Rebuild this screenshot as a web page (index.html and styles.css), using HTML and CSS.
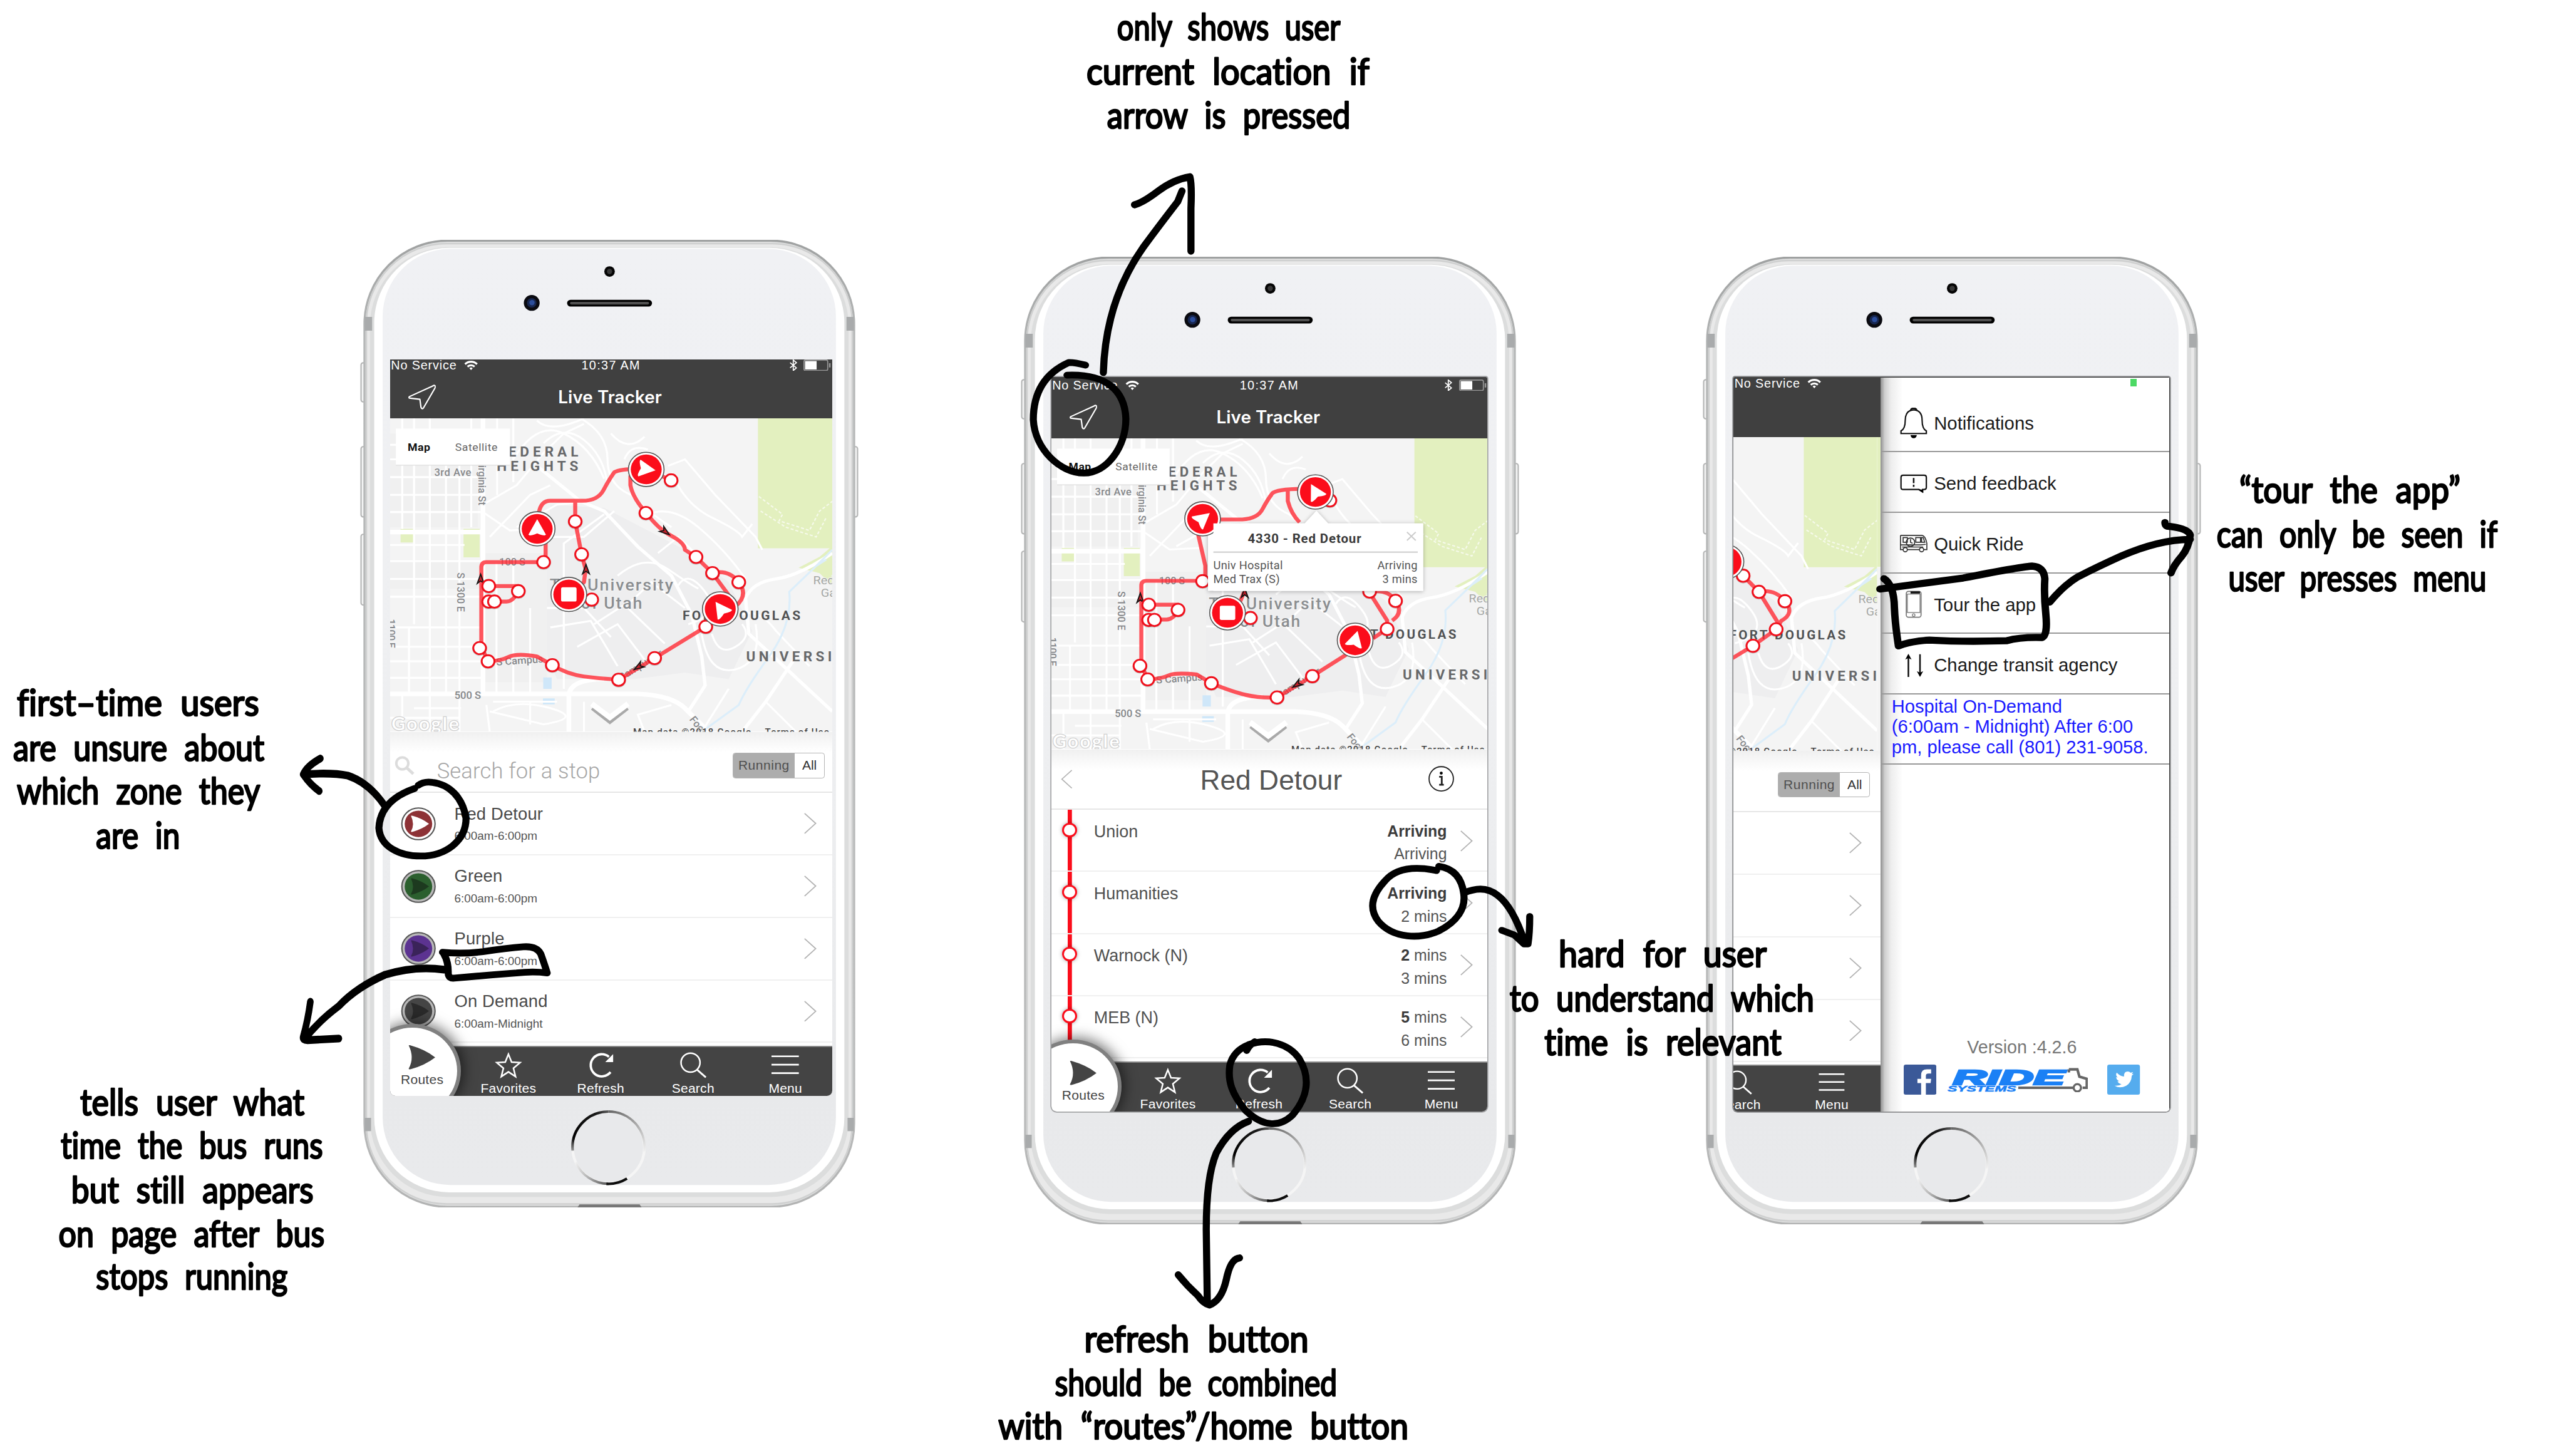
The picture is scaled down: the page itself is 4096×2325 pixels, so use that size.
FILE: index.html
```html
<!DOCTYPE html>
<html lang="en">
<head>
<meta charset="utf-8">
<title>Live Tracker – usability notes</title>
<link rel="stylesheet" href="styles.css">
</head>
<body>
<svg class="defs" aria-hidden="true">
  <defs>
    <linearGradient id="face" x1="0" x2="0" y1="0" y2="1"><stop offset="0" stop-color="#f0f1f4"/><stop offset=".5" stop-color="#eeeff1"/><stop offset=".9" stop-color="#e8e9eb"/><stop offset="1" stop-color="#e9eaec"/></linearGradient>
    <linearGradient id="edgeV" x1="0" x2="0" y1="0" y2="1"><stop offset="0" stop-color="#9fa1a1"/><stop offset=".1" stop-color="#b5b7b7"/><stop offset=".9" stop-color="#b9baba"/><stop offset="1" stop-color="#b2b3b3"/></linearGradient>
    <linearGradient id="ringA" gradientUnits="userSpaceOnUse" x1="396" y1="1730" x2="470" y2="1652"><stop offset="0" stop-color="#aaa"/><stop offset=".2" stop-color="#000"/><stop offset=".8" stop-color="#1a1a1a"/><stop offset="1" stop-color="#666"/></linearGradient>
    <linearGradient id="ringB" gradientUnits="userSpaceOnUse" x1="464" y1="1652" x2="532" y2="1730"><stop offset="0" stop-color="#666"/><stop offset=".6" stop-color="#b5b5b5"/><stop offset="1" stop-color="#f3f3f3"/></linearGradient>
    <linearGradient id="ringC" gradientUnits="userSpaceOnUse" x1="402" y1="1745" x2="464" y2="1789"><stop offset="0" stop-color="#f3f3f3"/><stop offset=".5" stop-color="#b0b0b0"/><stop offset="1" stop-color="#555"/></linearGradient>
  </defs>
  <symbol id="frame" viewBox="-8 0 946 1834" preserveAspectRatio="none">
    <g fill="#f4f4f4" stroke="#b4b5b5" stroke-width="2.5">
      <rect x="-5" y="233" width="12" height="74" rx="4"/><rect x="-5" y="392" width="12" height="133" rx="4"/><rect x="-5" y="558" width="12" height="134" rx="4"/><rect x="925" y="392" width="11" height="133" rx="4"/>
    </g>
    <rect x="1.5" y="1.5" width="928" height="1831" rx="158" fill="#e0e1e1" stroke="url(#edgeV)" stroke-width="4"/>
    <rect x="5" y="7" width="921" height="1820" rx="152" fill="#e9e9e9" stroke="#cfd0d0" stroke-width="3"/>
    <rect x="12" y="14" width="907" height="1800" rx="148" fill="#dcdddd" />
    <rect x="20" y="15" width="891" height="1790" rx="142" fill="#fff"/>
    <rect x="36" y="17" width="859" height="1774" rx="128" fill="url(#face)"/>
    <path d="M2 146h14v26H2zM915 146h14v26h-14zM2 1664h12v25H2zM917 1664h12v25h-12z" fill="#a9abac"/>
    <circle cx="466" cy="60" r="10" fill="#050505"/><circle cx="466" cy="60" r="5" fill="#383838"/>
    <circle cx="318.5" cy="119.5" r="15" fill="#0a0a10"/><circle cx="318.5" cy="119.5" r="9" fill="#17264f"/><circle cx="319" cy="119" r="5" fill="#2c4e9c"/>
    <rect x="385.500" y="113.500" width="161" height="13" rx="6.500" fill="#000"/><rect x="391" y="117.500" width="150" height="5" rx="2.500" fill="#505050"/>
    <circle cx="464" cy="1720" r="68" fill="#e8e9eb" stroke="#f5f5f5" stroke-width="5"/>
    <path d="M396 1726A68 68 0 0 1 464 1652" fill="none" stroke="url(#ringA)" stroke-width="5"/>
    <path d="M464 1652A68 68 0 0 1 532 1728" fill="none" stroke="url(#ringB)" stroke-width="4.500"/>
    <path d="M402 1748A68 68 0 0 0 464 1789" fill="none" stroke="url(#ringC)" stroke-width="4.500"/>
    <path d="M460 1789A68 68 0 0 0 499 1779" fill="none" stroke="#0d0d0d" stroke-width="5"/>
    <path d="M405 1834l4-6h114l4 6z" fill="#777"/>
  </symbol>
  <symbol id="i-wifi" viewBox="0 0 44 30"><path d="M2 10a29 29 0 0 1 40 0l-4 4.500a23 23 0 0 0-32 0zM9.500 17.500a18 18 0 0 1 25 0l-4 4.500a12 12 0 0 0-17 0zM17 24.500a7.500 7.500 0 0 1 10 0L22 30z" fill="#fff"/></symbol>
  <symbol id="i-bt" viewBox="0 0 16 22"><path d="M2 6l12 10-6 5V1l6 5L2 16" fill="none" stroke="#fff" stroke-width="2"/></symbol>
  <symbol id="i-batt" viewBox="0 0 52 22"><rect x="1" y="1" width="45" height="20" rx="3" fill="none" stroke="#999" stroke-width="2"/><rect x="3" y="3" width="22" height="16" fill="#fff"/><path d="M50 7v8" stroke="#999" stroke-width="3"/></symbol>
  <symbol id="i-loc" viewBox="0 0 52 48"><path d="M50 2Q49 1 46 3L2 23Q0 26 4 26L22 28L24 43Q26 48 29 44L51 6Q52 3 50 2Z" fill="none" stroke="#fff" stroke-width="2.600" stroke-linejoin="round"/></symbol>
  <symbol id="i-star" viewBox="0 0 52 50"><path d="M26 4l6 15 16 1-12.500 10.500 4 16L26 37.500 12.500 46.500l4-16L4 20l16-1z" fill="none" stroke="#fff" stroke-width="3"/></symbol>
  <symbol id="i-refresh" viewBox="0 0 52 50"><path d="M45 38A21 21 0 1 1 42 9" fill="none" stroke="#fff" stroke-width="4.500"/><path d="M50 4v15H35z" fill="#fff"/></symbol>
  <symbol id="i-search" viewBox="0 0 52 50"><circle cx="21" cy="20" r="18" fill="none" stroke="#fff" stroke-width="3"/><path d="M33 33l17 15" stroke="#fff" stroke-width="3.500"/></symbol>
  <symbol id="i-menu" viewBox="0 0 52 50"><path d="M0 8h52M0 24h52M0 40h52" stroke="#fff" stroke-width="3.200"/></symbol>
  <symbol id="i-chev" viewBox="0 0 24 40"><path d="M1 1l21 19L1 39" fill="none" stroke="#b3b3b3" stroke-width="2.200"/></symbol>
  <symbol id="i-dart" viewBox="0 0 52 46"><path d="M1 1Q0 0 3 0Q32 8 51 23Q32 38 3 46Q0 46 1 44Q12 24 1 1Z"/></symbol>
  <symbol id="base" viewBox="124 593 1314 970" preserveAspectRatio="none">
    <rect x="124" y="593" width="1314" height="970" fill="#f4f4f4"/>
    <path d="M600 860L760 870 1000 1000 1130 1100 1200 1250 1130 1400 1000 1380 850 1400 620 1400 560 1250 585 1050Z" fill="#eeeeef"/>
    <path d="M400 1010h190v400H400zM124 640h260v290H124zM124 1030h270v90H124z" fill="#f0f0f0"/>
    <path d="M1217 593h221v402H1217zM1338 1055L1400 1022 1438 988V1110L1400 1072ZM155 935h40v42h-40zM342 935h48v88h-48z" fill="#e3f0bf"/>
    <path d="M579 1395h25v35h-25zM578 1460h35v18h-35z" fill="#cfe7f9"/>
    <g fill="none" stroke="#fff" stroke-width="6">
      <path d="M124 675H395M124 720H390M124 775H395M124 830H395M124 883H395M124 985H345M124 1035H395M124 1090H395M124 1145H395M124 1240H395M124 1300H395M124 1345H395M124 1396H400M124 1520H330M195 1490h140"/>
      <path d="M160 593V935M195 593V1230M242 593V1563M290 700V1440M330 740V1563M365 593V930M442 593V830M490 593V790M490 1020V1440M440 1040V1440M180 1240V1440M160 1440V1563"/>
      <path d="M400 860L500 800 580 700 640 640 700 610M490 720Q560 600 640 640T760 780M580 670Q640 610 700 660T770 800M500 930L620 860 720 850M420 960L540 830 600 800M395 880L480 940 570 935M560 600Q600 640 700 593M690 593Q770 640 770 720T840 830Q900 890 960 930M780 640Q830 700 880 650M820 720Q840 670 890 690M600 960H700L790 880M640 1100V980L760 890"/>
      <path d="M950 740L1000 720 1090 830 1210 960 1230 1000M960 760Q1000 860 1080 900T1170 960L1200 920M890 890Q960 860 1040 930T1180 1090M920 1010L980 960 1040 1020M800 1080Q880 1010 950 1060T1040 1120M730 1230L820 1170 940 1290M680 1300L800 1230 880 1340M590 1180H700L780 1270M600 1240L720 1220 800 1360M640 1120V1430M540 1180V1440M840 1160L900 1100 1000 1180M980 1110Q1010 1060 1060 1130T1010 1230M1080 1260Q1100 1330 1150 1300T1170 1230M1050 1260Q1070 1390 1150 1370T1210 1230M1170 1200Q1220 1180 1270 1250L1370 1360"/>
      <path d="M430 1470H620M430 1500Q500 1460 600 1490T580 1540L420 1500M540 1470V1540M880 1563L860 1510 960 1480M1240 1470L1330 1563M1130 1430L1050 1563M700 1470V1563M420 1563L410 1480"/>
    </g>
    <g fill="none" stroke="#fff" stroke-width="14">
      <path d="M124 1446H860Q960 1450 1000 1490L1070 1563M400 593V1440M124 945H395"/>
      <path d="M560 740L690 850 760 880 860 990 960 1080 1020 1200 1050 1330 1060 1420 1010 1500M1438 1010Q1340 1080 1270 1090T1180 1150L1190 1260 1438 1500M1330 1330L1240 1470 1170 1563" stroke-width="10"/>
      <path d="M655 1563V1450Q660 1400 760 1400"/>
    </g>
    <path d="M1220 835L1290 890 1280 910 1370 940 1400 880 1438 850M1225 880L1300 930 1390 960 1420 900" fill="none" stroke="#f6faeb" stroke-width="4" stroke-dasharray="9 6"/>
    <path d="M1438 1000L1380 1060 1310 1130Q1320 1230 1250 1330T1160 1480L1050 1563M1390 1050l30-20" fill="none" stroke="#dceefa" stroke-width="6"/>
    <g class="maplabel">
      <text x="441" y="712" class="area" textLength="242">FEDERAL</text>
      <text x="441" y="755" class="area" textLength="242">HEIGHTS</text>
      <text x="255" y="771" textLength="110">3rd Ave</text>
      <text transform="translate(387 738) rotate(90)" textLength="124">irginia St</text>
      <text x="448" y="1049" textLength="78">100 S</text>
      <text transform="translate(324 1070) rotate(90)" textLength="122">S 1300 E</text>
      <text transform="translate(117 1214) rotate(90)" textLength="90">1100 E</text>
      <text x="598" y="1126" class="uni" textLength="367">The University</text>
      <text x="691" y="1182" class="uni" textLength="182">of Utah</text>
      <text x="993" y="1218" class="fort" textLength="350">FORT DOUGLAS</text>
      <text x="1182" y="1345" class="area" textLength="290">UNIVERSIT</text>
      <text x="1381" y="1106" class="park">Red</text><text x="1404" y="1145" class="park">Gar</text>
      <text transform="translate(440 1358) rotate(-4)" textLength="140">S Campus</text>
      <text transform="translate(790 1420) rotate(-33)" textLength="175">S Campus Dr</text>
      <text x="315" y="1462" textLength="79">500 S</text>
      <text transform="translate(1012 1525) rotate(52)">Foot</text>
      <text x="128" y="1558" class="google" textLength="200">Google</text>
      <text x="846" y="1574" class="credit" textLength="350">Map data ©2018 Google</text><text x="1238" y="1574" class="credit" textLength="190">Terms of Use</text>
    </g>
    <path d="M141 625h339v112H141z" fill="#fff"/><path d="M141 738h339" stroke="#e2e2e2" stroke-width="3"/>
    <text x="176" y="693" class="mt on" textLength="67">Map</text><text x="317" y="693" class="mt" textLength="126">Satellite</text>
  </symbol>
  <symbol id="down" viewBox="0 0 120 70" preserveAspectRatio="none"><path d="M8 12L60 52 112 12" transform="translate(0 8)" fill="none" stroke="#777" stroke-opacity=".6" stroke-width="13"/><path d="M6 8L60 48 114 8" fill="none" stroke="#fff" stroke-width="16"/></symbol>
  <symbol id="stop" viewBox="-26 -26 52 52" overflow="visible"><circle r="22" cy="2" fill="#000" opacity=".16"/><circle r="19" fill="#fff" stroke="#f0101c" stroke-width="5.500"/></symbol>
  <symbol id="bus" viewBox="-60 -60 120 120" overflow="visible"><circle r="53" fill="#fff" stroke="#555" stroke-width="3"/><circle r="46" fill="#fb0d1b"/></symbol>
  <symbol id="nav-arrow" viewBox="-30 -30 60 60" overflow="visible"><path d="M0-28L26 20Q24 26 0 16Q-24 26-26 20Z" fill="#fff"/></symbol>
  <symbol id="tick" viewBox="-16 -18 32 36" overflow="visible"><path d="M0-15L10 14 0 6-10 14Z" fill="#c8202a" stroke="#151515" stroke-width="3.500"/></symbol>
</svg>

<main class="board">

  <section class="phone p1">
    <svg class="frame"><use href="#frame"/></svg>
    <div class="screen">
      <header class="top">
        <div class="status"><span class="carrier">No Service<svg><use href="#i-wifi"/></svg></span><span class="clock">10:37 AM</span><span class="sys"><svg class="bt"><use href="#i-bt"/></svg><svg class="batt"><use href="#i-batt"/></svg></span></div>
        <div class="bar"><svg class="loc"><use href="#i-loc"/></svg><h1>Live Tracker</h1></div>
      </header>
      <svg class="map" viewBox="124 593 1314 970" preserveAspectRatio="none">
        <use href="#base" x="124" y="593" width="1314" height="970"/>
        <g class="route">
          <path d="M580 1038H410Q395 1038 395 1055V1300L415 1345Q450 1345 475 1332T560 1330L606 1357Q650 1385 700 1392T803 1402L910 1335 1062 1238M415 1112H505L505 1128Q490 1160 470 1160H395"/>
          <path d="M586 1038V940M566 900V885Q572 848 600 848H690Q740 850 758 815T790 760Q810 748 880 750M674 848V912L693 1014 705 1060 700 1100 655 1138M838 770V800Q845 840 885 885Q920 935 960 957T1000 1000L1033 1022 1082 1072Q1130 1060 1160 1100T1150 1175M1082 1072L1130 1140M885 750L959 785"/>
        </g>
        <g class="stops">
          <use href="#tick" x="377" y="1072" width="32" height="36"/><use href="#tick" x="690" y="1042" width="32" height="36"/>
          <g transform="translate(942 944) rotate(128)"><use href="#tick" x="-16" y="-18" width="32" height="36"/></g><g transform="translate(862 1362) rotate(236)"><use href="#tick" x="-16" y="-18" width="32" height="36"/></g>
          <use href="#stop" x="391" y="1134" width="52" height="52"/><use href="#stop" x="554" y="1012" width="52" height="52"/><use href="#stop" x="648" y="886" width="52" height="52"/><use href="#stop" x="667" y="988" width="52" height="52"/><use href="#stop" x="391" y="1086" width="52" height="52"/><use href="#stop" x="479" y="1102" width="52" height="52"/><use href="#stop" x="408" y="1134" width="52" height="52"/><use href="#stop" x="364" y="1278" width="52" height="52"/><use href="#stop" x="389" y="1319" width="52" height="52"/><use href="#stop" x="580" y="1331" width="52" height="52"/><use href="#stop" x="777" y="1376" width="52" height="52"/><use href="#stop" x="884" y="1309" width="52" height="52"/><use href="#stop" x="1036" y="1212" width="52" height="52"/><use href="#stop" x="697" y="1128" width="52" height="52"/><use href="#stop" x="858" y="860" width="52" height="52"/><use href="#stop" x="933" y="759" width="52" height="52"/><use href="#stop" x="1007" y="996" width="52" height="52"/><use href="#stop" x="1056" y="1046" width="52" height="52"/><use href="#stop" x="1134" y="1074" width="52" height="52"/>
        </g>
        <use href="#bus" x="825" y="691" width="120" height="120"/><g transform="translate(885 750) rotate(98)"><use href="#nav-arrow" x="-30" y="-30" width="60" height="60"/></g>
        <use href="#bus" x="501" y="875" width="120" height="120"/><use href="#nav-arrow" x="531" y="903" width="60" height="60"/>
        <use href="#bus" x="595" y="1078" width="120" height="120"/><rect x="632" y="1116" width="46" height="44" rx="5" fill="#fff"/>
        <use href="#bus" x="1045" y="1123" width="120" height="120"/><g transform="translate(1107 1184) rotate(-35)"><use href="#nav-arrow" x="-30" y="-30" width="60" height="60"/></g>
        <use href="#down" x="717" y="1468" width="120" height="74"/>
      </svg>
      <div class="search"><svg class="mag" viewBox="0 0 40 38"><circle cx="15" cy="15" r="12" fill="none" stroke="#dcdcdc" stroke-width="5"/><path d="M24 24l13 12" stroke="#dcdcdc" stroke-width="6"/></svg><span class="ph">Search for a stop</span><span class="seg"><b>Running</b><i>All</i></span></div>
      <ul class="routes">
        <li><svg class="badge red" viewBox="0 0 68 64"><ellipse cx="34" cy="32" rx="32" ry="30.500"/><ellipse class="in" cx="34" cy="32" rx="26.500" ry="25.500"/><use href="#i-dart" x="19" y="16" width="36" height="32"/></svg><div><h2>Red Detour</h2><p>6:00am-6:00pm</p></div><svg class="chev"><use href="#i-chev"/></svg></li>
        <li><svg class="badge green" viewBox="0 0 68 64"><ellipse cx="34" cy="32" rx="32" ry="30.500"/><ellipse class="in" cx="34" cy="32" rx="26.500" ry="25.500"/><use href="#i-dart" x="19" y="16" width="36" height="32"/></svg><div><h2>Green</h2><p>6:00am-6:00pm</p></div><svg class="chev"><use href="#i-chev"/></svg></li>
        <li><svg class="badge purple" viewBox="0 0 68 64"><ellipse cx="34" cy="32" rx="32" ry="30.500"/><ellipse class="in" cx="34" cy="32" rx="26.500" ry="25.500"/><use href="#i-dart" x="19" y="16" width="36" height="32"/></svg><div><h2>Purple</h2><p>6:00am-6:00pm</p></div><svg class="chev"><use href="#i-chev"/></svg></li>
        <li><svg class="badge gray" viewBox="0 0 68 64"><ellipse cx="34" cy="32" rx="32" ry="30.500"/><ellipse class="in" cx="34" cy="32" rx="26.500" ry="25.500"/><use href="#i-dart" x="19" y="16" width="36" height="32"/></svg><div><h2>On Demand</h2><p>6:00am-Midnight</p></div><svg class="chev"><use href="#i-chev"/></svg></li>
      </ul>
      <nav class="tabs"><div class="home"><svg><use href="#i-dart"/></svg>Routes</div><a><svg><use href="#i-star"/></svg>Favorites</a><a><svg><use href="#i-refresh"/></svg>Refresh</a><a><svg><use href="#i-search"/></svg>Search</a><a><svg><use href="#i-menu"/></svg>Menu</a></nav>
    </div>
  </section>

  <section class="phone p2">
    <svg class="frame"><use href="#frame"/></svg>
    <div class="screen">
      <header class="top">
        <div class="status"><span class="carrier">No Service<svg><use href="#i-wifi"/></svg></span><span class="clock">10:37 AM</span><span class="sys"><svg class="bt"><use href="#i-bt"/></svg><svg class="batt"><use href="#i-batt"/></svg></span></div>
        <div class="bar"><svg class="loc"><use href="#i-loc"/></svg><h1>Live Tracker</h1></div>
      </header>
      <svg class="map" viewBox="113 606 1296 962" preserveAspectRatio="none">
        <use href="#base" x="113" y="606" width="1296" height="962"/>
        <g class="route">
          <path d="M562 1047H395Q380 1047 380 1062V1310L400 1352Q440 1350 460 1340T545 1337L588 1364Q650 1390 690 1400T783 1408L888 1342 1015 1258M400 1121H490V1137Q475 1167 455 1167H380"/>
          <path d="M570 1047V1000L548 900M610 857H680Q725 855 740 825T770 775Q790 760 900 762M815 762V800Q825 840 850 866M1057 1082L1110 1170 1110 1196 1068 1225M1057 1082Q1110 1070 1135 1108T1125 1170M637 1147L670 1120 685 1082M897 770L940 797"/>
        </g>
        <g class="stops">
          <use href="#tick" x="361" y="1082" width="32" height="36"/><use href="#tick" x="671" y="1066" width="32" height="36"/><g transform="translate(842 1368) rotate(236)"><use href="#tick" x="-16" y="-18" width="32" height="36"/></g>
          <use href="#stop" x="376" y="1142" width="52" height="52"/><use href="#stop" x="536" y="1022" width="52" height="52"/><use href="#stop" x="376" y="1095" width="52" height="52"/><use href="#stop" x="463" y="1111" width="52" height="52"/><use href="#stop" x="393" y="1142" width="52" height="52"/><use href="#stop" x="350" y="1284" width="52" height="52"/><use href="#stop" x="373" y="1326" width="52" height="52"/><use href="#stop" x="562" y="1338" width="52" height="52"/><use href="#stop" x="757" y="1382" width="52" height="52"/><use href="#stop" x="862" y="1316" width="52" height="52"/><use href="#stop" x="678" y="1136" width="52" height="52"/><use href="#stop" x="914" y="772" width="52" height="52"/><use href="#stop" x="1032" y="1054" width="52" height="52"/><use href="#stop" x="1109" y="1083" width="52" height="52"/><use href="#stop" x="1084" y="1170" width="52" height="52"/>
        </g>
        <path class="pop" d="M578 869H865L900 830 935 869H1217V1078H578Z"/>
        <use href="#bus" x="837" y="712" width="120" height="120"/><g transform="translate(897 772) rotate(-28)"><use href="#nav-arrow" x="-30" y="-30" width="60" height="60"/></g>
        <use href="#bus" x="502" y="795" width="120" height="120"/><g transform="translate(562 855) rotate(50)"><use href="#nav-arrow" x="-30" y="-30" width="60" height="60"/></g>
        <use href="#bus" x="576" y="1086" width="120" height="120"/><rect x="613" y="1124" width="46" height="44" rx="5" fill="#fff"/>
        <use href="#bus" x="955" y="1171" width="120" height="120"/><g transform="translate(1015 1229) rotate(15)"><use href="#nav-arrow" x="-30" y="-30" width="60" height="60"/></g>
        <path d="M594 869H1217V1078H594Z" fill="#fff"/>
        <path d="M594 958H1201" stroke="#c4c4c4" stroke-width="3.500"/><path d="M1169 896l26 26m0-26l-26 26" stroke="#ccc" stroke-width="4"/>
        <g class="poptext"><text x="696" y="929" class="h" textLength="337">4330 - Red Detour</text><text x="594" y="1011" textLength="206">Univ Hospital</text><text x="594" y="1054" textLength="197">Med Trax (S)</text><text x="1081" y="1011" textLength="119">Arriving</text><text x="1096" y="1054" textLength="104">3 mins</text></g>
        <use href="#down" x="697" y="1476" width="120" height="74"/>
      </svg>
      <div class="title"><svg class="back"><use href="#i-chev"/></svg><h2>Red Detour</h2><svg class="info" viewBox="0 0 50 50"><circle cx="25" cy="25" r="23.500" fill="none" stroke="#222" stroke-width="2.200"/><circle cx="25" cy="14" r="2.900"/><path d="M21 21h5v15M21 36.500h9" fill="none" stroke="#222" stroke-width="3.400"/></svg></div>
      <ul class="stopslist">
        <li><i class="dot"></i><h3>Union</h3><div><b>Arriving</b><span>Arriving</span></div><svg class="chev"><use href="#i-chev"/></svg></li>
        <li><i class="dot"></i><h3>Humanities</h3><div><b>Arriving</b><span>2 mins</span></div><svg class="chev"><use href="#i-chev"/></svg></li>
        <li><i class="dot"></i><h3>Warnock (N)</h3><div><span><b>2</b> mins</span><span>3 mins</span></div><svg class="chev"><use href="#i-chev"/></svg></li>
        <li><i class="dot"></i><h3>MEB (N)</h3><div><span><b>5</b> mins</span><span>6 mins</span></div><svg class="chev"><use href="#i-chev"/></svg></li>
      </ul>
      <nav class="tabs"><div class="home"><svg><use href="#i-dart"/></svg>Routes</div><a><svg><use href="#i-star"/></svg>Favorites</a><a><svg><use href="#i-refresh"/></svg>Refresh</a><a><svg><use href="#i-search"/></svg>Search</a><a><svg><use href="#i-menu"/></svg>Menu</a></nav>
    </div>
  </section>

  <section class="phone p3">
    <svg class="frame"><use href="#frame"/></svg>
    <div class="screen split">
      <div class="under">
        <header class="top"><div class="status"><span class="carrier">No Service<svg><use href="#i-wifi"/></svg></span></div></header>
        <svg class="map" viewBox="118 601 437 972" preserveAspectRatio="none">
          <use href="#base" x="-751" y="601" width="1296" height="972"/>
          <rect x="545" y="601" width="12" height="402" fill="#e3f0bf"/><rect x="545" y="1003" width="12" height="570" fill="#f4f4f4"/>
          <g class="route"><path d="M100 985L147 1030 194 1080Q240 1070 271 1108T260 1170L245 1196 176 1247 100 1295M194 1080L250 1175"/></g>
          <g class="stops"><use href="#stop" x="121" y="1004" width="52" height="52"/><use href="#stop" x="168" y="1054" width="52" height="52"/><use href="#stop" x="245" y="1083" width="52" height="52"/><use href="#stop" x="219" y="1170" width="52" height="52"/><use href="#stop" x="150" y="1221" width="52" height="52"/></g>
          <use href="#bus" x="36" y="927" width="120" height="120"/>
        </svg>
        <div class="search"><span class="seg"><b>Running</b><i>All</i></span></div>
        <ul class="routes"><li><svg class="chev"><use href="#i-chev"/></svg></li><li><svg class="chev"><use href="#i-chev"/></svg></li><li><svg class="chev"><use href="#i-chev"/></svg></li><li><svg class="chev"><use href="#i-chev"/></svg></li></ul>
        <nav class="tabs"><a><svg><use href="#i-search"/></svg>Search</a><a><svg><use href="#i-menu"/></svg>Menu</a></nav>
      </div>
      <aside class="drawer">
        <span class="led"></span>
        <a class="first"><svg viewBox="0 0 52 58"><path d="M20 6Q20 1 26 1T32 6M26 4Q42 5 42 24Q42 40 50 44V49H2V44Q10 40 10 24Q10 5 26 4Z" fill="none" stroke="#111" stroke-width="2.600"/><path d="M20 52h12q-1 6-6 6t-6-6z"/></svg>Notifications</a>
        <a><svg viewBox="0 0 52 58"><path d="M36 40H6Q2 40 2 36V17Q2 13 6 13H46Q50 13 50 17V36Q50 40 46 40H43V44Z" fill="none" stroke="#111" stroke-width="2.600"/><path d="M34 40h10v7z"/><path d="M26 18v10M26 31v4" stroke="#111" stroke-width="3"/></svg>Send feedback</a>
        <a><svg viewBox="0 0 52 58"><g fill="none" stroke="#333" stroke-width="2"><path d="M1 13H42Q48 14 51 28V40H45M38 40H14M7 40H1V13M1 31h38l10-1M6 17h8v9H6zM30 17h9v9h-9zM41 17h3l3 9h-6zM4 35h40"/><circle cx="10" cy="40" r="4"/><circle cx="41" cy="40" r="4"/><circle cx="20" cy="26" r="8"/><path d="M20 20v6l4 2"/></g></svg>Quick Ride</a>
        <a><svg viewBox="0 0 52 58"><rect x="12" y="4" width="28" height="49" rx="4" fill="none" stroke="#777" stroke-width="2"/><path d="M14 9h24v35H14z" fill="none" stroke="#777" stroke-width="1.500"/><path d="M20 6h18" stroke="#111" stroke-width="4"/><circle cx="26" cy="49" r="2.500" fill="none" stroke="#777" stroke-width="1.500"/></svg>Tour the app</a>
        <a><svg viewBox="0 0 52 58"><path d="M16 51V10M38 8V48" stroke="#111" stroke-width="3"/><path d="M16 7l-6 11 6-3 6 3zM38 51l-6-11 6 3 6-3z"/></svg>Change transit agency</a>
        <p class="notice">Hospital On-Demand<br>(6:00am - Midnight) After 6:00<br>pm, please call (801) 231-9058.</p>
        <div class="foot">
          <span>Version :4.2.6</span>
          <div class="brands">
            <svg class="fb" viewBox="0 0 62 57" preserveAspectRatio="none"><rect width="62" height="57" rx="4" fill="#3b5998"/><path d="M33 57V35H26V27H33V20Q33 9 44 9H52V17H47Q42 17 42 21V27H52L51 35H42V57Z" fill="#fff"/></svg>
            <svg class="ride" viewBox="0 0 266 46"><text x="10" y="32" class="r1" textLength="212" lengthAdjust="spacingAndGlyphs">RIDE</text><text x="0" y="45" class="r2" textLength="130" lengthAdjust="spacingAndGlyphs">SYSTEMS</text><path d="M134 38H238M230 3H246L250 17 264 21V38H256M230 3V9" fill="none" stroke="#666" stroke-width="5"/><circle cx="246" cy="38" r="7" fill="#fff" stroke="#666" stroke-width="4"/></svg>
            <svg class="tw" viewBox="0 0 62 57" preserveAspectRatio="none"><rect width="62" height="57" rx="4" fill="#55acee"/><path d="M14 40Q22 41 27 37Q21 36 19.500 31.500H23Q17 29 17 23.500L20 24.500Q15 20 18 15Q24 22 32 22.500Q31 13 39 13Q42 13 44.500 15.500L49 14L46.500 18L50 17.500L46.500 21Q46 34 36 40Q24 46 14 40Z" fill="#fff"/></svg>
          </div>
        </div>
      </aside>
    </div>
  </section>

  <svg class="ink" viewBox="0 0 4861 2759">
    <g class="stroke">
      <g transform="translate(0 1250) scale(.676 .7908)" stroke-width="18.500">
        <path d="M898 237Q860 255 850 275Q870 300 895 315M850 275Q930 270 975 278Q1035 295 1080 352"/>
        <path d="M1245 743Q1165 733 1080 755Q1000 785 950 830Q895 865 855 908M870 820Q863 865 850 904Q848 912 862 912L950 908"/>
      </g>
      <g transform="translate(660 1370) scale(.6378 .6122)" stroke-width="21">
        <path d="M197 203Q95 240 91 325C95 385 155 412 215 412C290 412 350 365 350 295C340 230 300 190 250 184Q225 180 208 193"/>
        <path d="M280 710Q340 716 400 708Q470 697 520 693Q560 690 572 715Q584 750 591 774Q550 768 500 774Q400 782 315 790Q298 792 297 775Q298 740 284 715" />
      </g>
      <path d="M2150 388Q2166 384 2195 362T2255 335Q2259 350 2257 395V476M2240 362L2232 382Q2195 430 2167 468Q2095 570 2091 706"/>
      <g transform="translate(1920 460) scale(.6378 .6122)" stroke-width="21">
        <path d="M215 379Q180 370 165 371Q60 420 60 548C65 640 140 713 210 713C280 713 335 630 335 545C332 460 280 405 160 410"/>
      </g>
      <g transform="translate(1920 1400) scale(.6378 .6122)" stroke-width="21">
        <path d="M1258 408Q1150 385 1105 440C1060 490 1060 530 1085 565C1130 620 1210 620 1265 595C1320 565 1345 525 1339 480Q1330 405 1265 395M1340 477Q1400 450 1440 485Q1485 520 1520 630M1535 550Q1535 600 1530 635H1518L1490 608 1452 593"/>
        <path d="M694 965Q700 950 718 938M700 947C760 925 820 945 850 990C885 1050 875 1110 830 1165C790 1205 740 1200 690 1150C650 1100 637 1060 644 1010Q655 965 700 947"/>
      </g>
      <path d="M2366 2125Q2330 2138 2305 2185Q2286 2230 2286 2330L2288 2470M2233 2416Q2250 2437 2270 2455Q2280 2470 2292 2473Q2315 2465 2324 2425Q2332 2385 2349 2384"/>
      <g transform="translate(3210 460) scale(.6378 .6122)" stroke-width="22">
        <path d="M553 1072Q680 1055 800 1038Q960 1005 1005 1001Q1040 1003 1043 1040Q1040 1090 1046 1150Q1052 1215 1035 1222Q970 1220 930 1232Q800 1236 700 1230Q650 1232 608 1248Q598 1180 596 1130Q595 1060 565 1040M1058 1112Q1100 1060 1140 1035Q1200 1003 1270 970Q1380 920 1475 918M1400 866Q1400 880 1415 878Q1470 885 1475 905Q1470 945 1450 970Q1425 1000 1418 1022"/>
      </g>
    </g>
    <g class="hand">
      <text x="32" y="1357" textLength="459" lengthAdjust="spacingAndGlyphs">first–time users</text>
      <text x="25" y="1442" textLength="476" lengthAdjust="spacingAndGlyphs">are unsure about</text>
      <text x="32" y="1524" textLength="461" lengthAdjust="spacingAndGlyphs">which zone they</text>
      <text x="182" y="1608" textLength="159" lengthAdjust="spacingAndGlyphs">are in</text>
      <text x="152" y="2114" textLength="425" lengthAdjust="spacingAndGlyphs">tells user what</text>
      <text x="115" y="2195" textLength="497" lengthAdjust="spacingAndGlyphs">time the bus runs</text>
      <text x="135" y="2280" textLength="459" lengthAdjust="spacingAndGlyphs">but still appears</text>
      <text x="111" y="2363" textLength="504" lengthAdjust="spacingAndGlyphs">on page after bus</text>
      <text x="182" y="2443" textLength="363" lengthAdjust="spacingAndGlyphs">stops running</text>
      <text x="2117" y="76" textLength="423" lengthAdjust="spacingAndGlyphs">only shows user</text>
      <text x="2059" y="160" textLength="536" lengthAdjust="spacingAndGlyphs">current location if</text>
      <text x="2098" y="243" textLength="461" lengthAdjust="spacingAndGlyphs">arrow is pressed</text>
      <text x="2954" y="1832" textLength="394" lengthAdjust="spacingAndGlyphs">hard for user</text>
      <text x="2861" y="1917" textLength="577" lengthAdjust="spacingAndGlyphs">to understand which</text>
      <text x="2927" y="2000" textLength="449" lengthAdjust="spacingAndGlyphs">time is relevant</text>
      <text x="2055" y="2562" textLength="425" lengthAdjust="spacingAndGlyphs">refresh button</text>
      <text x="1999" y="2645" textLength="535" lengthAdjust="spacingAndGlyphs">should be combined</text>
      <text x="1892" y="2727" textLength="777" lengthAdjust="spacingAndGlyphs">with “routes”/home button</text>
      <text x="4244" y="953" textLength="419" lengthAdjust="spacingAndGlyphs">“tour the app”</text>
      <text x="4201" y="1037" textLength="532" lengthAdjust="spacingAndGlyphs">can only be seen if</text>
      <text x="4223" y="1120" textLength="489" lengthAdjust="spacingAndGlyphs">user presses menu</text>
    </g>
  </svg>
</main>
</body>
</html>
```
FILE: styles.css
```css
* { box-sizing: border-box; margin: 0; padding: 0; }
html, body { background: #fff; overflow: hidden; }
body { font-family: "Liberation Sans", Arial, sans-serif; }
ul { list-style: none; }
.defs { position: absolute; width: 0; height: 0; }

.board { position: relative; width: 4861px; height: 2759px; zoom: .842625; overflow: hidden; background: #fff; }

/* phones placed freely on the board */
.phone { position: absolute; width: 931px; height: 1834px; --pitch: 118.4px; --tab: 175px; }
.p1 { left: 689px; top: 454px; }
.p2 { left: 1941px; top: 486px; --pitch: 117.6px; --tab: 172.7px; }
.p3 { left: 3234px; top: 486px; --pitch: 118.6px; }
.frame { position: absolute; left: -8px; top: 0; width: 946px; height: 1834px; }
.screen { position: relative; display: flex; flex-direction: column; margin: 227px 0 0 50px; width: 838px; height: 1396px; overflow: hidden; background: #fff; border-radius: 0 0 10px 10px; }
.p2 .screen { margin: 228px 0 0 51px; width: 827px; height: 1393px; box-shadow: 0 0 0 2px #a3a4a6; border-radius: 3px 3px 10px 10px; }
.p3 .screen { margin: 228px 0 0 51px; width: 827px; height: 1393px; box-shadow: 0 0 0 2px #8a8b8d; border-radius: 3px 3px 8px 8px; }

.top { flex: none; height: 112px; background: #404040; color: #fff; }
.p2 .top { height: 117px; padding-top: 5px; }
.p3 .top { height: 114px; padding-top: 2px; }
.status { display: grid; grid-template-columns: 1fr auto 1fr; height: 21px; align-items: center; font-size: 23.5px; line-height: 20px; letter-spacing: 1px; padding: 0 2px; white-space: nowrap; }
.carrier { display: flex; align-items: center; gap: 12px; }
.carrier svg { width: 29px; height: 19px; }
.clock { letter-spacing: 1.6px; }
.sys { display: flex; justify-content: flex-end; align-items: center; gap: 12px; }
.bt { width: 16px; height: 22px; } .batt { width: 52px; height: 22px; }
.bar { position: relative; display: flex; justify-content: center; align-items: center; height: 100px; padding-right: 4px; }
.bar h1 { font: 600 33px Inter, sans-serif; letter-spacing: .1px; }
.loc { position: absolute; left: 35px; top: 27px; width: 52px; height: 48px; }

.map { flex: none; display: block; width: 100%; height: 594px; }
.p2 .map { height: 589px; } .p3 .map { height: 595px; }
.maplabel { font: 500 31px Roboto, sans-serif; fill: #85878a; stroke: #f6f6f6; stroke-width: 4; paint-order: stroke; }
.area { font-weight: 700; font-size: 42px; fill: #67686a; }
.fort { font-weight: 700; font-size: 39px; fill: #505254; }
.uni { font-size: 50px; fill: #8b8e91; }
.park { font-size: 37px; font-weight: 400; fill: #a5a8a5; }
.google { font: 600 56px Lato, sans-serif; fill: #fff; stroke: #cfcfcf; stroke-width: 5; }
.credit { font-size: 28px; fill: #444; }
.mt { font: 400 33px Roboto, sans-serif; fill: #666; }
.mt.on { font-weight: 700; fill: #111; }
.route { fill: none; stroke: #ff2a34; stroke-opacity: .8; stroke-width: 12; stroke-linejoin: round; }
.pop { fill: #fff; filter: drop-shadow(0 3px 6px rgba(0,0,0,.3)); }
.poptext { font: 400 34px Roboto, sans-serif; fill: #555; }
.poptext .h { font-weight: 700; font-size: 38px; fill: #3a3a3a; }

.search, .title { flex: none; display: flex; align-items: center; height: 116px; border-bottom: 3px solid #e6e6e6; background: linear-gradient(#f0f0f0, #fff 38px); }
.mag { width: 39px; height: 36px; margin: 14px 0 0 9px; }
.ph { margin: 38px 0 0 41px; font: 300 41px/1 Roboto, sans-serif; letter-spacing: .2px; color: #a6a6a6; white-space: nowrap; }
.search .ph { margin-top: 36px; }
.seg { display: flex; width: 175px; height: 48px; margin: 14px 14px 0 auto; border: 2px solid #b4b4b4; border-radius: 5px; font-size: 25px; line-height: 46px; text-align: center; color: #505050; overflow: hidden; }
.seg b { font-weight: 400; width: 117px; background: #adadad; letter-spacing: .6px; }
.seg i { font-style: normal; flex: 1; color: #333; }

.routes li { display: flex; align-items: center; height: var(--pitch); border-bottom: 2.5px solid #f0f0f0; padding: 0 29px 0 21px; }
.routes div { padding: 0 0 0 34px; }
.routes h2 { font-size: 32.500px; font-weight: 400; line-height: 38px; color: #4a4a4a; letter-spacing: .2px; }
.routes p { margin-top: 9px; font-size: 22.500px; line-height: 28px; color: #555; }
.badge { width: 67px; height: 63px; fill: #b9b9b9; }
.badge > ellipse { stroke: #555; stroke-width: 2.5; }
.badge .in { stroke: none; }
.badge use { fill: #2a2a2a; }
.badge.red { fill: #fff; } .badge.red .in { fill: #8d3236; } .badge.red use { fill: #fff; }
.green .in { fill: #2b5f2e; } .green use { fill: #1d3a1f; }
.purple .in { fill: #5c3391; } .purple use { fill: #3a2359; }
.gray .in { fill: #454545; }
.chev { width: 24px; height: 40px; margin-left: auto; flex: none; }

.tabs { position: relative; display: flex; height: 95px; margin-top: auto; border-top: 3px solid #8c8c8c; padding-left: 137px; background: #444; color: #fff; font-size: 25px; letter-spacing: .3px; line-height: 26px; }
.tabs a { flex: none; display: flex; flex-direction: column; align-items: center; gap: 6px; width: var(--tab); padding-top: 9px; }
.tabs svg { width: 52px; height: 50px; }
.p2 .tabs { padding-left: 135px; }
.home { position: absolute; left: -50px; top: -44px; width: 184px; height: 178px; border: 8px solid #808080; border-radius: 50%; background: #fff; color: #444; text-align: center; padding: 33px 0 0 38px; box-shadow: 4px -2px 26px rgba(0,0,0,.6); }
.home svg { display: block; width: 52px; height: 46px; margin: 0 auto 6px; fill: #444; }

.title { height: 115px; padding: 0 62px 0 18px; justify-content: space-between; }
.title h2 { font: 300 52.500px "Liberation Sans", sans-serif; color: #555; letter-spacing: .1px; padding: 4px 0 0 80px; }
.back { width: 22px; height: 36px; transform: scaleX(-1); }
.info { width: 51px; height: 49px; }
.stopslist li { position: relative; display: flex; align-items: flex-start; height: var(--pitch); border-bottom: 2.5px solid #f0f0f0; padding: 0 28px 0 21px; background: linear-gradient(#fb0d1b, #fb0d1b) 31px 0 / 8px 100% no-repeat; }
.dot { flex: none; width: 28px; height: 28px; margin-top: 24px; border: 4px solid #fb0d1b; border-radius: 50%; background: #fff; box-shadow: 0 0 8px rgba(0,0,0,.35); }
.stopslist h3 { margin: 22px 0 0 32px; font-size: 32px; font-weight: 400; line-height: 38px; color: #505050; }
.stopslist div { display: flex; flex-direction: column; align-items: flex-end; margin: 20px 25px 0 auto; font-size: 29.500px; line-height: 43px; color: #555; }
.stopslist b { color: #3c3c3c; }
.stopslist .chev { margin: 39px 0 0; }

/* third screen: list pushed left under the drawer */
.split { display: flex; flex-direction: row; }
.under { display: flex; flex-direction: column; flex: none; width: 279px; height: 1393px; overflow: hidden; }
.under .seg { margin-right: 20px; }
.under .routes li { padding-right: 35px; }
.under .tabs { height: 90px; padding-left: 0; }
.under .tabs a:first-of-type { margin-left: -76px; }
.drawer { position: relative; flex: 1; display: flex; flex-direction: column; background: linear-gradient(90deg, #8f8f8f, #cfcfcf 8px, #ededed 20px, #fff 42px); font-size: 34.800px; color: #1a1a1a; border-right: 2px solid #333; border-top: 2px solid #333; }
.drawer a { display: flex; align-items: center; gap: 12px; height: 114.8px; padding: 6px 0 0 37px; border-bottom: 3px solid #999; white-space: nowrap; }
.drawer a.first { height: 142px; padding-top: 34px; }
.drawer a svg { width: 52px; height: 58px; flex: none; }
.led { position: absolute; left: 473px; top: 3px; width: 12px; height: 14px; background: #4cd964; }
.notice { height: 133px; padding: 3px 0 0 21px; border-bottom: 3px solid #999; font-size: 34.600px; line-height: 38.500px; color: #1a1aff; white-space: nowrap; }
.foot { margin: auto 0 32px 44px; display: flex; flex-direction: column; gap: 14px; width: 448px; color: #777; font-size: 34px; }
.foot span { text-align: center; }
.brands { display: flex; justify-content: space-between; align-items: center; }
.fb, .tw { width: 62px; height: 57px; }
.ride { width: 266px; height: 46px; margin-right: 16px; }
.r1 { font: italic 900 40px "Liberation Sans", sans-serif; fill: #1b80f5; stroke: #1b80f5; stroke-width: 3; }
.r2 { font: italic 900 15px "Liberation Sans", sans-serif; fill: #1b80f5; stroke: #1b80f5; stroke-width: .6; }

/* handwritten layer over everything */
.ink { position: absolute; left: 0; top: 0; width: 4861px; height: 2759px; }
.stroke { fill: none; stroke: #000; stroke-width: 13.5; stroke-linecap: round; stroke-linejoin: round; }
.hand { font: 400 70px Lato, "Open Sans", sans-serif; font-variant-ligatures: none; word-spacing: 20px; fill: #000; stroke: #000; stroke-width: 3.2; stroke-linejoin: round; }
```
